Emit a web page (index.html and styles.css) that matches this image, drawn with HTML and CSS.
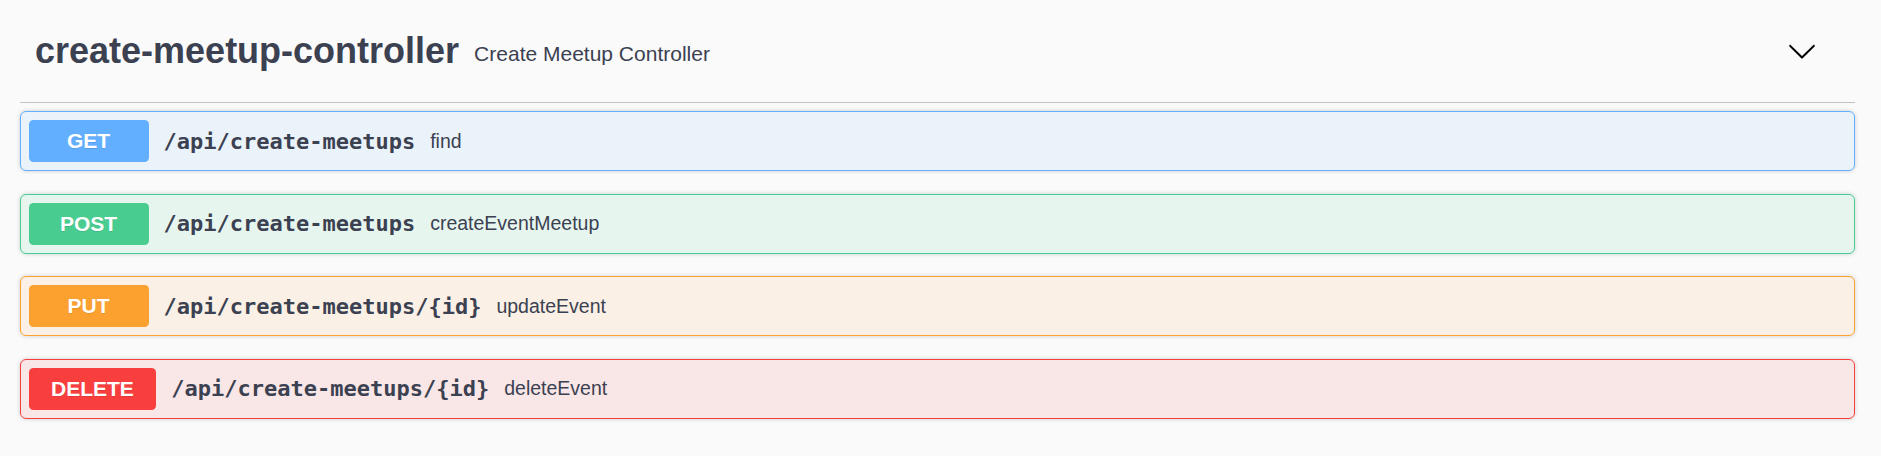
FILE: index.html
```html
<!DOCTYPE html>
<html lang="en">
<head>
<meta charset="utf-8">
<title>create-meetup-controller</title>
<link rel="stylesheet" href="styles.css">
</head>
<body>
<div class="wrapper">
  <section class="tag-section">
    <h4 class="opblock-tag">
      <span class="tag-name">create-meetup-controller</span>
      <small class="tag-desc">Create Meetup Controller</small>
      <button class="expand" aria-label="collapse">
        <svg width="30" height="30" viewBox="0 0 20 20"><path d="M17.418 6.109c.272-.268.709-.268.979 0s.271.701 0 .969l-7.908 7.83c-.27.268-.707.268-.979 0l-7.908-7.830c-.27-.268-.27-.701 0-.969.271-.268.709-.268.979 0L10 13.25l7.418-7.141z"/></svg>
      </button>
    </h4>
    <div class="operations">
      <div class="opblock get">
        <div class="summary">
          <span class="method">GET</span>
          <span class="path">/api/create-meetups</span>
          <span class="desc">find</span>
        </div>
      </div>
      <div class="opblock post">
        <div class="summary">
          <span class="method">POST</span>
          <span class="path">/api/create-meetups</span>
          <span class="desc">createEventMeetup</span>
        </div>
      </div>
      <div class="opblock put">
        <div class="summary">
          <span class="method">PUT</span>
          <span class="path">/api/create-meetups/{id}</span>
          <span class="desc">updateEvent</span>
        </div>
      </div>
      <div class="opblock delete">
        <div class="summary">
          <span class="method">DELETE</span>
          <span class="path">/api/create-meetups/{id}</span>
          <span class="desc">deleteEvent</span>
        </div>
      </div>
    </div>
  </section>
</div>
</body>
</html>
```

FILE: styles.css
```css
html, body {
  margin: 0;
  padding: 0;
  background: #fafafa;
}

body {
  font-family: "Liberation Sans", Arial, sans-serif;
  color: #3b4151;
}

.wrapper {
  padding: 0 26px 0 20px;
}

.opblock-tag {
  display: flex;
  align-items: center;
  min-height: 72px;
  margin: 0 0 8px;
  padding: 15px 38px 15px 15px;
  border-bottom: 1.5px solid rgba(59, 65, 81, 0.3);
  font-size: 36px;
  font-weight: 700;
  color: #3b4151;
}

.tag-name {
  line-height: normal;
}

.tag-desc {
  flex: 2;
  padding: 5px 15px 0;
  font-size: 21px;
  font-weight: 400;
}

.expand {
  display: flex;
  align-items: center;
  padding: 0;
  border: none;
  background: none;
  cursor: pointer;
}

.expand svg {
  display: block;
  fill: #000;
}

.opblock {
  margin: 0 0 22.5px;
  border: 1px solid #000;
  border-radius: 6px;
  box-shadow: 0 0 4.5px rgba(0, 0, 0, 0.19);
}

.summary {
  display: flex;
  align-items: center;
  padding: 8px 7.5px;
}

.method {
  min-width: 120px;
  box-sizing: border-box;
  padding: 9px 22.5px;
  border-radius: 4.5px;
  font-family: "Liberation Sans", Arial, sans-serif;
  font-size: 21px;
  font-weight: 700;
  line-height: 24px;
  text-align: center;
  color: #fff;
  text-shadow: 0 1px 0 rgba(0, 0, 0, 0.1);
}

.path {
  padding: 0 15px;
  font-family: "DejaVu Sans Mono", "Liberation Mono", monospace;
  font-size: 22px;
  font-weight: 700;
  color: #3b4151;
}

.desc {
  flex: 1 1 auto;
  font-size: 19.5px;
  color: #3b4151;
}

.get { border-color: #61affe; background: rgba(97, 175, 254, 0.1); }
.get .method { background: #61affe; }

.post { border-color: #49cc90; background: rgba(73, 204, 144, 0.1); }
.post .method { background: #49cc90; }

.put { border-color: #fca130; background: rgba(252, 161, 48, 0.1); }
.put .method { background: #fca130; }

.delete { border-color: #f93e3e; background: rgba(249, 62, 62, 0.1); }
.delete .method { background: #f93e3e; }
```
